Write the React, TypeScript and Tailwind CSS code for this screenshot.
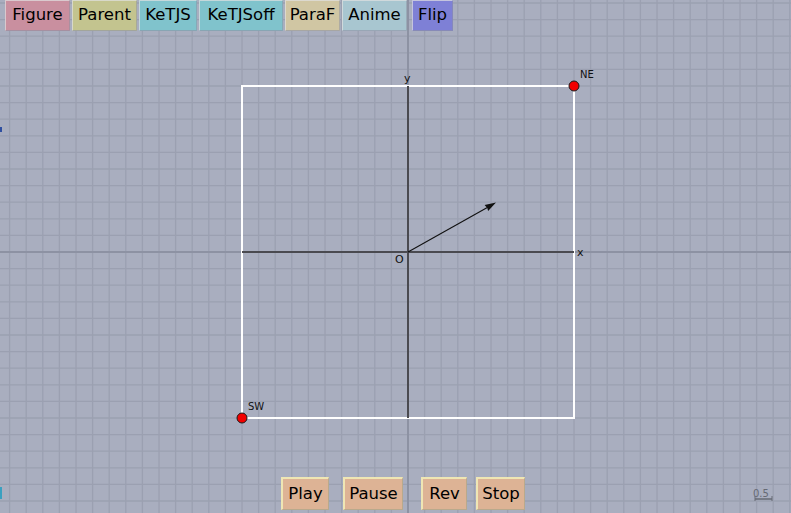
import React from "react";

const OX = 408;
const OY = 252;
const STEP = 16.6;

const topButtons = [
  { label: "Figure", bg: "bg-[#c98f9f]", w: "w-[65px]" },
  { label: "Parent", bg: "bg-[#c3c48f]", w: "w-[65px]" },
  { label: "KeTJS", bg: "bg-[#80c3cc]", w: "w-[58px]" },
  { label: "KeTJSoff", bg: "bg-[#80c3cc]", w: "w-[84px]" },
  { label: "ParaF", bg: "bg-[#d0c6a3]", w: "w-[55px]" },
  { label: "Anime", bg: "bg-[#a8c6d0]", w: "w-[65px]" },
  { label: "Flip", bg: "bg-[#7e80d6]", w: "w-[41px]" },
];

const bottomButtons = [
  { label: "Play", w: "w-[48px]", ml: "ml-[281px]" },
  { label: "Pause", w: "w-[60px]", ml: "ml-[14px]" },
  { label: "Rev", w: "w-[46px]", ml: "ml-[18px]" },
  { label: "Stop", w: "w-[49px]", ml: "ml-[9px]" },
];

function Canvas() {
  const vLines: number[] = [];
  for (let k = -25; k <= 24; k++) {
    const x = OX + k * STEP;
    if (x >= -2 && x <= 793) vLines.push(x);
  }
  const hLines: number[] = [];
  for (let k = -16; k <= 16; k++) {
    const y = OY + k * STEP;
    if (y >= -2 && y <= 515) hLines.push(y);
  }
  const font = "'DejaVu Sans', 'Liberation Sans', sans-serif";
  return (
    <svg width={791} height={513} viewBox="0 0 791 513" className="block">
      <rect x={0} y={0} width={791} height={513} fill="#a9aebf" />
      {vLines.map((x, i) => (
        <line key={"v" + i} x1={x} y1={0} x2={x} y2={513} stroke="#9ba0b1" strokeWidth={1.3} />
      ))}
      {hLines.map((y, i) => (
        <line key={"h" + i} x1={0} y1={y} x2={791} y2={y} stroke="#9ba0b1" strokeWidth={1.3} />
      ))}
      {/* full axis lines */}
      <line x1={OX} y1={0} x2={OX} y2={513} stroke="#8d92a3" strokeWidth={2} />
      <line x1={0} y1={OY} x2={791} y2={OY} stroke="#8d92a3" strokeWidth={2} />
      {/* square */}
      <rect x={242} y={86} width={332} height={332} fill="none" stroke="#ffffff" strokeWidth={2} />
      {/* axes inside */}
      <line x1={OX} y1={86} x2={OX} y2={418} stroke="#4a4a50" strokeWidth={2} />
      <line x1={242} y1={OY} x2={574} y2={OY} stroke="#4a4a50" strokeWidth={2} />
      {/* vector */}
      <line x1={OX} y1={OY} x2={490} y2={206} stroke="#111" strokeWidth={1.1} />
      <polygon points="496,202.5 484.6,204.9 487.3,208 488.1,211" fill="#111" />
      {/* labels */}
      <text x={404} y={82} fontSize={11} fontFamily={font} fill="#111">y</text>
      <text x={577} y={256} fontSize={11} fontFamily={font} fill="#111">x</text>
      <text x={395} y={263} fontSize={11} fontFamily={font} fill="#111">O</text>
      <text x={580} y={78} fontSize={10} fontFamily={font} fill="#111">NE</text>
      <text x={248} y={410} fontSize={10} fontFamily={font} fill="#111">SW</text>
      {/* points */}
      <circle cx={574} cy={86} r={5} fill="#f20000" stroke="#1a1a1a" strokeWidth={1} />
      <circle cx={242} cy={418} r={5} fill="#f20000" stroke="#1a1a1a" strokeWidth={1} />
      {/* scale bar */}
      <text x={753} y={497} fontSize={10} fontFamily={font} fill="#666a75">0.5</text>
      <line x1={755} y1={499} x2={772} y2={499} stroke="#666a75" strokeWidth={1.5} />
      <line x1={755} y1={496} x2={755} y2={501} stroke="#666a75" strokeWidth={1} />
      <line x1={772} y1={496} x2={772} y2={501} stroke="#666a75" strokeWidth={1} />
      {/* left edge marks */}
      <rect x={0} y={127} width={2} height={5} fill="#2f4fa0" />
      <rect x={0} y={487} width={2} height={12} fill="#3aa0c0" />
    </svg>
  );
}

export default function App() {
  return (
    <div
      className="relative w-[791px] h-[513px] overflow-hidden bg-[#a9aebf]"
      style={{ fontFamily: "'DejaVu Sans', 'Liberation Sans', sans-serif" }}
    >
      <Canvas />
      <div className="absolute left-[5px] top-0 flex gap-[2px]">
        {topButtons.map((b) => (
          <div
            key={b.label}
            className={`${b.bg} ${b.w} h-[31px] flex items-center justify-center text-[16.5px] text-black border-t border-l border-[#e2e2e2]/70 border-r border-r-[#8d92a3]/50 border-b border-b-[#8d92a3]/60 ${b.label === "Flip" ? "ml-[3px]" : ""}`}
          >
            {b.label}
          </div>
        ))}
      </div>
      <div className="absolute left-0 top-[477px] flex">
        {bottomButtons.map((b) => (
          <div
            key={b.label}
            className={`${b.w} ${b.ml} h-[33px] flex items-center justify-center bg-[#ddb395] text-[16.5px] text-black border-t-2 border-l-2 border-[#efe6b4] border-r border-b border-r-[#b9a98c] border-b-[#b9a98c]`}
          >
            {b.label}
          </div>
        ))}
      </div>
    </div>
  );
}
